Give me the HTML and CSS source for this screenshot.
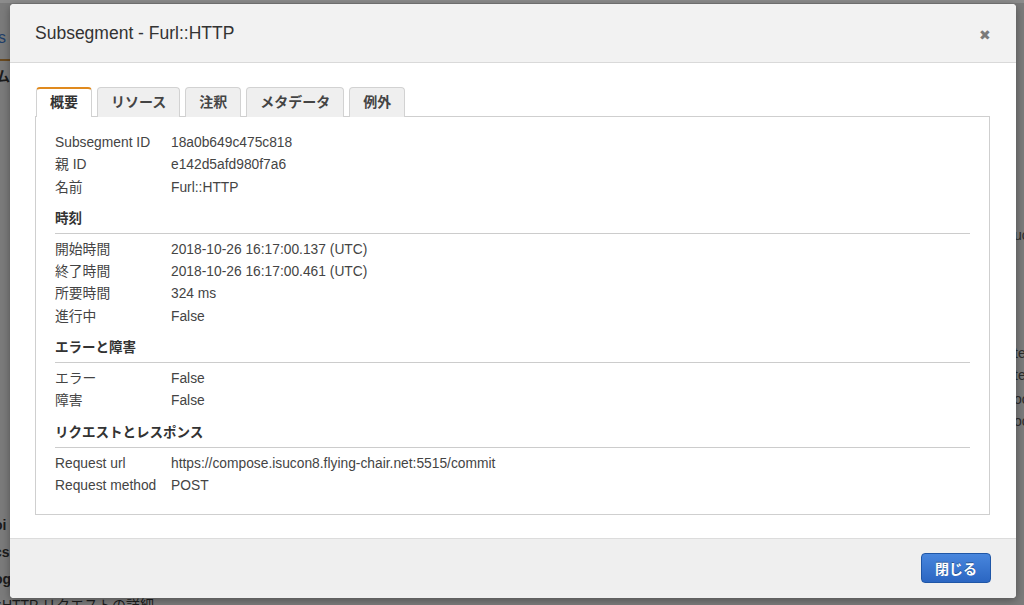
FILE: index.html
```html
<!DOCTYPE html>
<html lang="ja">
<head>
<meta charset="utf-8">
<title>Subsegment - Furl::HTTP</title>
<link rel="stylesheet" href="styles.css">
</head>
<body>
<div class="backdrop">
  <span class="bg-frag bg-s">s</span>
  <span class="bg-line"></span>
  <span class="bg-frag bg-mu">ム</span>
  <span class="bg-frag bg-r1">uc</span>
  <span class="bg-frag bg-r2">te</span>
  <span class="bg-frag bg-r3">te</span>
  <span class="bg-frag bg-r4">oo</span>
  <span class="bg-frag bg-r5">oo</span>
  <span class="bg-frag bg-l1">oi</span>
  <span class="bg-frag bg-l2">cs</span>
  <span class="bg-frag bg-l3">og</span>
  <span class="bg-frag bg-l4">:HTTP リクエストの詳細</span>
</div>
<div class="modal">
  <div class="modal-header">
    <h3 class="modal-title">Subsegment - Furl::HTTP</h3>
    <span class="close">&#x2716;</span>
  </div>
  <div class="modal-body">
    <ul class="tabs">
      <li class="tab active">概要</li>
      <li class="tab">リソース</li>
      <li class="tab">注釈</li>
      <li class="tab">メタデータ</li>
      <li class="tab">例外</li>
    </ul>
    <div class="panel">
      <dl class="rows">
        <div class="row"><dt>Subsegment ID</dt><dd>18a0b649c475c818</dd></div>
        <div class="row"><dt>親 ID</dt><dd>e142d5afd980f7a6</dd></div>
        <div class="row"><dt>名前</dt><dd>Furl::HTTP</dd></div>
      </dl>
      <h4 class="section">時刻</h4>
      <dl class="rows">
        <div class="row"><dt>開始時間</dt><dd>2018-10-26 16:17:00.137 (UTC)</dd></div>
        <div class="row"><dt>終了時間</dt><dd>2018-10-26 16:17:00.461 (UTC)</dd></div>
        <div class="row"><dt>所要時間</dt><dd>324 ms</dd></div>
        <div class="row"><dt>進行中</dt><dd>False</dd></div>
      </dl>
      <h4 class="section">エラーと障害</h4>
      <dl class="rows">
        <div class="row"><dt>エラー</dt><dd>False</dd></div>
        <div class="row"><dt>障害</dt><dd>False</dd></div>
      </dl>
      <h4 class="section">リクエストとレスポンス</h4>
      <dl class="rows">
        <div class="row"><dt>Request url</dt><dd>https://compose.isucon8.flying-chair.net:5515/commit</dd></div>
        <div class="row"><dt>Request method</dt><dd>POST</dd></div>
      </dl>
    </div>
  </div>
  <div class="modal-footer">
    <button class="btn-primary">閉じる</button>
  </div>
</div>
</body>
</html>
```
FILE: styles.css
```css
* { box-sizing: border-box; }
html, body {
  margin: 0;
  padding: 0;
  width: 1024px;
  height: 605px;
  overflow: hidden;
}
body {
  background: #7c7c7c;
  font-family: "Liberation Sans", Arial, "Noto Sans CJK JP", sans-serif;
  color: #333;
  position: relative;
  padding: 4px 8px 0 10px;
}
.backdrop {
  position: absolute;
  inset: 0;
  background: #7b7b7b;
  border-top: 3px solid #8c8c8c;
  overflow: hidden;
}
.bg-frag {
  position: absolute;
  font-size: 14px;
  font-weight: bold;
  color: #1c1c1c;
  line-height: 16px;
  white-space: nowrap;
}
.bg-s { left: -2px; top: 27px; color: #1f3f6a; font-weight: normal; font-size: 16px; }
.bg-line { position: absolute; left: 0; top: 56px; width: 10px; height: 2px; background: #6a4a20; }
.bg-mu { left: -4px; top: 65px; }
.bg-r1 { left: 1014px; top: 224px; font-weight: normal; color: #2c2c2c; }
.bg-r2 { left: 1014px; top: 342px; font-weight: normal; color: #2c2c2c; }
.bg-r3 { left: 1014px; top: 364px; font-weight: normal; color: #2c2c2c; }
.bg-r4 { left: 1014px; top: 388px; font-weight: normal; color: #2c2c2c; }
.bg-r5 { left: 1014px; top: 410px; font-weight: normal; color: #2c2c2c; }
.bg-l1 { left: -6px; top: 514px; }
.bg-l2 { left: -6px; top: 541px; }
.bg-l3 { left: -6px; top: 568px; }
.bg-l4 { left: -2px; top: 594px; font-weight: normal; }

.modal {
  position: relative;
  width: 1006px;
  height: 594px;
  background: #fff;
  border-radius: 4px;
  box-shadow: 0 2px 8px rgba(0,0,0,0.35);
  display: flex;
  flex-direction: column;
  overflow: hidden;
}
.modal-header {
  height: 59px;
  background: #f2f2f2;
  border-bottom: 1px solid #d9d9d9;
  display: flex;
  align-items: center;
  justify-content: space-between;
  padding: 0 25px 0 25px;
  flex: none;
}
.modal-title {
  margin: 0;
  font-size: 17.5px;
  font-weight: normal;
  color: #333;
  padding-top: 1px;
}
.close {
  font-size: 14px;
  color: #7a7a7a;
  line-height: 1;
  padding-top: 3px;
}
.modal-body {
  flex: 1;
  padding: 24px 26px 23px 25px;
}
.tabs {
  list-style: none;
  margin: 0;
  padding: 0 0 0 1px;
  display: flex;
  gap: 5px;
  position: relative;
  z-index: 1;
}
.tab {
  height: 30px;
  padding: 0 13px;
  font-size: 14px;
  font-weight: bold;
  color: #444;
  line-height: 29px;
  background: #efefef;
  border: 1px solid #d2d2d2;
  border-bottom: none;
  border-radius: 4px 4px 0 0;
  margin-bottom: -1px;
}
.tab.active {
  background: #fff;
  border-top: 2px solid #e08a1e;
  line-height: 27px;
  color: #333;
}
.panel {
  border: 1px solid #cfcfcf;
  padding: 15px 19px 16px 19px;
  height: 399px;
}
.rows { margin: 0; }
.row {
  display: flex;
  font-size: 13.8px;
  line-height: 22.3px;
  color: #444;
}
.row dt {
  width: 116px;
  flex: none;
}
.row dd { margin: 0; }
.section {
  margin: 10px 0 5px 0;
  font-size: 13.5px;
  font-weight: bold;
  color: #333;
  line-height: 20px;
  padding-bottom: 4px;
  border-bottom: 1px solid #cccccc;
}
.modal-footer {
  flex: none;
  height: 61px;
  background: #efefef;
  border-top: 1px solid #dcdcdc;
  display: flex;
  align-items: center;
  justify-content: flex-end;
  padding: 0 25px 3px 0;
}
.btn-primary {
  width: 70px;
  height: 30px;
  border: 1px solid #1f56a6;
  border-radius: 4px;
  background: linear-gradient(#4886dd, #2b66c2);
  color: #fff;
  font-family: "Liberation Sans", Arial, "Noto Sans CJK JP", sans-serif;
  font-size: 14px;
  font-weight: bold;
  text-shadow: 0 -1px 0 rgba(0,0,0,0.35);
  padding: 0;
}
```
